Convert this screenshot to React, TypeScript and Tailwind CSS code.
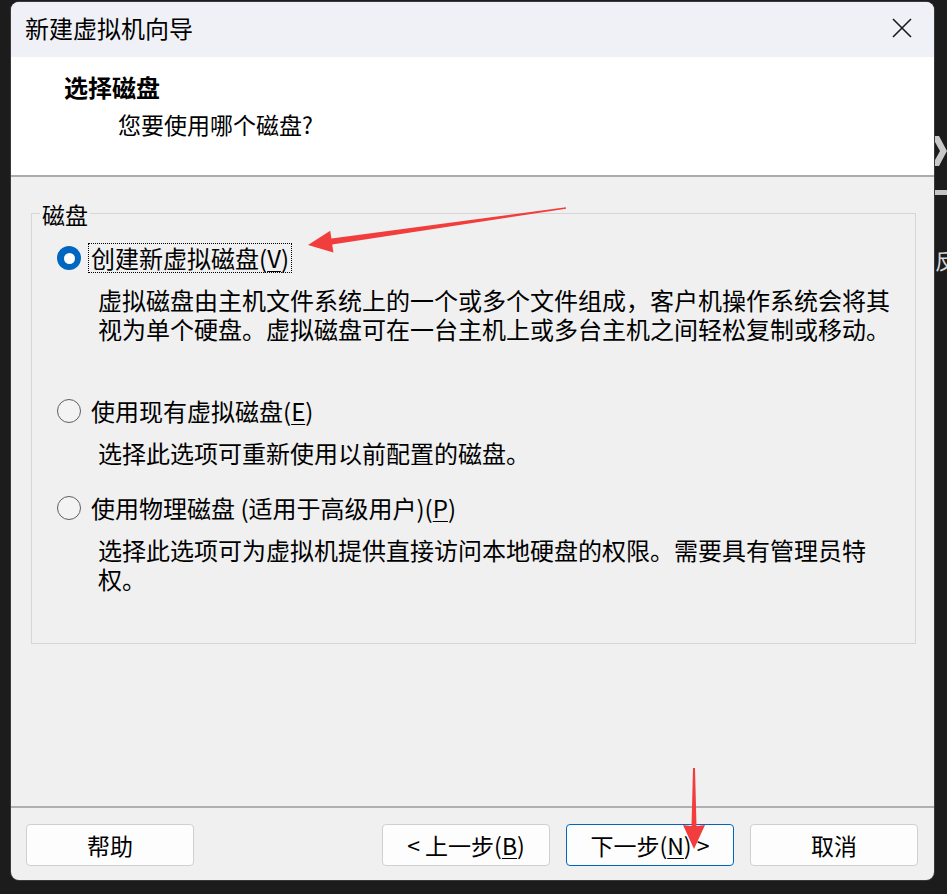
import React from 'react';

const Mn = ({ c }: { c: string }) => (
  <span className="underline decoration-1 underline-offset-[3px]">{c}</span>
);

const Radio = ({ checked }: { checked?: boolean }) =>
  checked ? (
    <span className="flex h-[24px] w-[24px] shrink-0 items-center justify-center rounded-full bg-[#0067c0]">
      <span className="h-[11px] w-[11px] rounded-full bg-white" />
    </span>
  ) : (
    <span className="h-[24px] w-[24px] shrink-0 rounded-full border-[1.5px] border-[#5f5f5f] bg-[#f3f3f3]" />
  );

const Option = ({
  checked,
  label,
  desc,
  className,
}: {
  checked?: boolean;
  label: React.ReactNode;
  desc: string;
  className?: string;
}) => (
  <div className={className}>
    <div className="flex h-[30px] items-center pl-[25px]">
      <Radio checked={checked} />
      <span
        className={
          'ml-[7px] flex h-[30px] items-center border px-[2px] text-[24px] leading-[28px] ' +
          (checked ? 'border-dotted border-black' : 'border-transparent')
        }
      >
        {label}
      </span>
    </div>
    <p className="ml-[66px] mt-[12px] w-[800px] text-[24px] leading-[29px]">{desc}</p>
  </div>
);

const Btn = ({ children, primary }: { children: React.ReactNode; primary?: boolean }) => (
  <button
    className={
      'flex h-[42px] w-[168px] items-center justify-center rounded-[4px] border bg-[#fdfdfd] text-[23px] leading-[28px] text-black ' +
      (primary ? 'border-[#0067c0]' : 'border-[#d0d0d0]')
    }
  >
    {children}
  </button>
);

export default function App() {
  return (
    <div className="relative h-[894px] w-[947px] overflow-hidden bg-[#1c1c1c] font-['Noto_Sans_CJK_SC','Noto_Sans',sans-serif] text-black">
      {/* desktop bits peeking out on the right */}
      <svg className="absolute left-[935px] top-[136px]" width="12" height="30" viewBox="0 0 12 30">
        <polygon points="0,0 4,0 12,15 4,30 0,30 0,24 5,15 0,6" fill="#c9c9c9" />
      </svg>
      <div className="absolute left-[935px] top-[190px] h-[5px] w-[12px] bg-[#c4c4c4]" />
      <div className="absolute left-[935px] top-[246px] h-[26px] w-[12px] overflow-hidden">
        <span className="block text-[22px] leading-[26px] text-[#d6d6d6]">反</span>
      </div>

      <div className="ml-[11px] mt-[2px] flex h-[878px] w-[923px] flex-col overflow-hidden rounded-[8px] bg-[#f0f0f0] shadow-[0_0_0_1px_#3a3a3a]">
        {/* title bar */}
        <div className="flex h-[55px] shrink-0 items-center justify-between bg-[#eff1f7] pb-[3px] pl-[14px] pr-[21px]">
          <span className="text-[24px] leading-[30px]">新建虚拟机向导</span>
          <svg width="22" height="22" viewBox="0 0 22 22">
            <path d="M2 2L20 20M20 2L2 20" stroke="#1a1a1a" strokeWidth="1.6" />
          </svg>
        </div>

        {/* header */}
        <div className="h-[118px] shrink-0 bg-white pl-[53px] pt-[15px]">
          <div className="text-[24px] font-bold leading-[30px]">选择磁盘</div>
          <div className="ml-[54px] mt-[7px] text-[23px] leading-[30px]">您要使用哪个磁盘?</div>
        </div>
        <div className="h-[2px] shrink-0 bg-[#acacac]" />

        {/* body */}
        <div className="flex-1 pl-[20px] pt-[36px]">
          <div className="relative h-[431px] w-[885px] border border-[#d6d6d6]">
            <span className="absolute left-[8px] top-[-14px] bg-[#f0f0f0] px-[2px] text-[23px] leading-[28px]">
              磁盘
            </span>
            <Option
              className="pt-[29px]"
              checked
              label={
                <>
                  创建新虚拟磁盘(<Mn c="V" />)
                </>
              }
              desc="虚拟磁盘由主机文件系统上的一个或多个文件组成，客户机操作系统会将其视为单个硬盘。虚拟磁盘可在一台主机上或多台主机之间轻松复制或移动。"
            />
            <Option
              className="mt-[53px]"
              label={
                <>
                  使用现有虚拟磁盘(<Mn c="E" />)
                </>
              }
              desc="选择此选项可重新使用以前配置的磁盘。"
            />
            <Option
              className="mt-[26px]"
              label={
                <>
                  使用物理磁盘 (适用于高级用户)(<Mn c="P" />)
                </>
              }
              desc="选择此选项可为虚拟机提供直接访问本地硬盘的权限。需要具有管理员特权。"
            />
          </div>
        </div>

        {/* footer */}
        <div className="h-[2px] shrink-0 bg-[#b0b0b0]" />
        <div className="flex h-[72px] shrink-0 items-start pl-[15px] pr-[16px] pt-[16px]">
          <Btn>帮助</Btn>
          <div className="ml-auto flex gap-[16px]">
            <Btn>
              &lt; 上一步(<Mn c="B" />)
            </Btn>
            <Btn primary>
              下一步(<Mn c="N" />) &gt;
            </Btn>
            <Btn>取消</Btn>
          </div>
        </div>
      </div>

      {/* red annotation arrows */}
      <svg className="pointer-events-none absolute left-0 top-0" width="947" height="894" viewBox="0 0 947 894">
        <polygon
          points="308,245 330.2,230.7 331.4,238.6 566,207.3 566,208.7 332.2,244.6 333.4,252.5"
          fill="#f23d3d"
        />
        <polygon
          points="694,849 683,825 691.5,826 693,768 695,768 696.5,826 705,825"
          fill="#f23d3d"
        />
      </svg>
    </div>
  );
}
